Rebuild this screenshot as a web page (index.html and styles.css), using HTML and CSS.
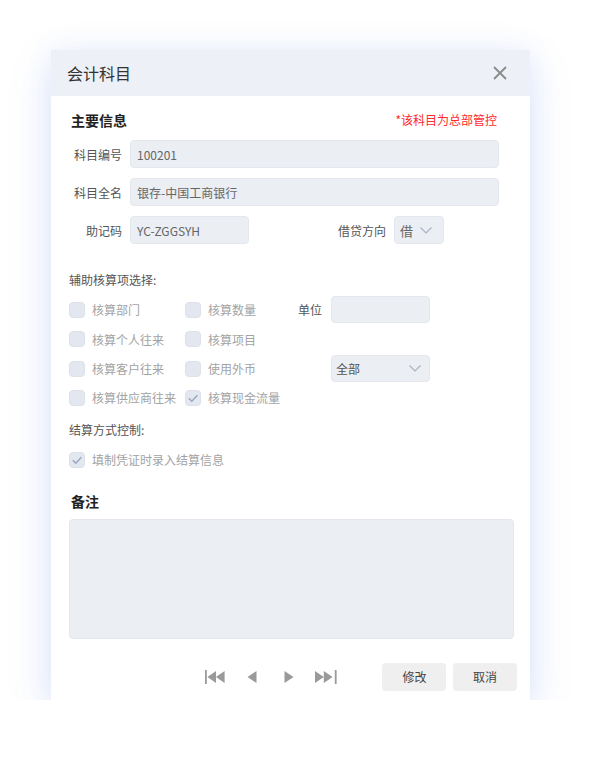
FILE: index.html
```html
<!DOCTYPE html>
<html lang="zh">
<head>
<meta charset="utf-8">
<title>会计科目</title>
<link rel="stylesheet" href="styles.css">
</head>
<body>
<div class="dialog">
  <div class="header">
    <span class="title">会计科目</span>
    <svg class="close" width="14" height="14" viewBox="0 0 14 14"><path d="M1 1L13 13M13 1L1 13" stroke="#8a8a8a" stroke-width="1.8" fill="none"/></svg>
  </div>
  <div class="body">
    <div class="section-head">
      <span class="section-title">主要信息</span>
      <span class="warn">*该科目为总部管控</span>
    </div>
    <div class="row">
      <span class="label">科目编号</span>
      <div class="input wide">100201</div>
    </div>
    <div class="row">
      <span class="label">科目全名</span>
      <div class="input wide">银存-中国工商银行</div>
    </div>
    <div class="row">
      <span class="label">助记码</span>
      <div class="input short">YC-ZGGSYH</div>
      <span class="label dir-label">借贷方向</span>
      <div class="input select dir">借<svg class="chev" width="12" height="7" viewBox="0 0 12 7"><path d="M0.5 0.5L6 6L11.5 0.5" stroke="#aab3c5" stroke-width="1.2" fill="none"/></svg></div>
    </div>

    <div class="sub-head aux-head">辅助核算项选择:</div>
    <div class="check-grid">
      <div class="check"><span class="box"></span><span>核算部门</span></div>
      <div class="check"><span class="box"></span><span>核算数量</span></div>
      <div class="unit"><span class="unit-label">单位</span><div class="input unit-input"></div></div>

      <div class="check"><span class="box"></span><span>核算个人往来</span></div>
      <div class="check"><span class="box"></span><span>核算项目</span></div>
      <div></div>

      <div class="check"><span class="box"></span><span>核算客户往来</span></div>
      <div class="check"><span class="box"></span><span>使用外币</span></div>
      <div class="unit"><div class="input select cur">全部<svg class="chev" width="12" height="7" viewBox="0 0 12 7"><path d="M0.5 0.5L6 6L11.5 0.5" stroke="#aab3c5" stroke-width="1.2" fill="none"/></svg></div></div>

      <div class="check"><span class="box"></span><span>核算供应商往来</span></div>
      <div class="check"><span class="box"><svg width="16" height="16" viewBox="0 0 16 16"><path d="M3.8 8.2L6.8 11.2L12.4 5.2" stroke="#9aa6bd" stroke-width="1.4" fill="none"/></svg></span><span>核算现金流量</span></div>
      <div></div>
    </div>

    <div class="sub-head settle-head">结算方式控制:</div>
    <div class="check settle"><span class="box"><svg width="16" height="16" viewBox="0 0 16 16"><path d="M3.8 8.2L6.8 11.2L12.4 5.2" stroke="#9aa6bd" stroke-width="1.4" fill="none"/></svg></span><span>填制凭证时录入结算信息</span></div>

    <div class="section-title remark-title">备注</div>
    <div class="textarea"></div>

    <div class="footer">
      <div class="nav">
        <span class="nav-btn"><svg width="20" height="14" viewBox="0 0 20 14"><rect x="0" y="0" width="1.8" height="14" fill="#9a9a9a"/><path d="M2.4 7L11 1V13Z M11 7L19.6 1V13Z" fill="#9a9a9a"/></svg></span>
        <span class="nav-btn"><svg width="10" height="14" viewBox="0 0 10 14"><path d="M0.5 7L9.5 1V13Z" fill="#9a9a9a"/></svg></span>
        <span class="nav-btn"><svg width="10" height="14" viewBox="0 0 10 14"><path d="M9.5 7L0.5 1V13Z" fill="#9a9a9a"/></svg></span>
        <span class="nav-btn"><svg width="22" height="14" viewBox="0 0 22 14"><path d="M0 1L8.8 7L0 13Z M8.8 1L17.6 7L8.8 13Z" fill="#9a9a9a"/><rect x="19.8" y="0" width="1.8" height="14" fill="#9a9a9a"/></svg></span>
      </div>
      <button class="btn">修改</button>
      <button class="btn">取消</button>
    </div>
  </div>
</div>
</body>
</html>
```
FILE: styles.css
```css
html, body {
  margin: 0;
  padding: 0;
  background: #ffffff;
}
body {
  font-family: "Noto Sans CJK SC", "Noto Sans", sans-serif;
  color: #333;
  padding: 50px 0 0 51px;
}
.dialog {
  width: 479px;
  height: 650px;
  background: #fff;
  box-shadow: 0 14px 40px rgba(80, 120, 230, 0.17), 0 0 26px rgba(80, 120, 230, 0.08);
  display: flex;
  flex-direction: column;
}
.header {
  height: 46px;
  background: #edf0f6;
  display: flex;
  align-items: center;
  justify-content: space-between;
  padding: 0 23px 0 16px;
}
.title {
  font-size: 16px;
  color: #333;
  line-height: 20px;
}
.body {
  padding: 14px 13px 0 18px;
  display: flex;
  flex-direction: column;
}
.section-head {
  display: flex;
  justify-content: space-between;
  align-items: center;
  height: 20px;
  width: 428px;
}
.section-title {
  font-size: 14px;
  font-weight: bold;
  color: #222;
  line-height: 20px;
  padding-left: 2px;
}
.warn {
  font-size: 12px;
  color: #ff2a2a;
  line-height: 20px;
}
.row {
  display: flex;
  align-items: center;
  height: 28px;
  margin-top: 10px;
}
.label {
  width: 53px;
  text-align: right;
  font-size: 12px;
  color: #555;
  margin-right: 8px;
  flex: none;
}
.input {
  box-sizing: border-box;
  height: 28px;
  background: #ebeef3;
  border: 1px solid #e4e7ed;
  border-radius: 4px;
  font-size: 12px;
  color: #666;
  display: flex;
  align-items: center;
  padding: 0 6px;
  flex: none;
}
.wide { width: 369px; }
.short { width: 119px; }
.dir-label {
  width: 48px;
  margin-left: 89px;
}
.select {
  justify-content: space-between;
  padding: 0 11px 0 5px;
}
.dir { width: 50px; font-size: 13px; }
.sub-head {
  font-size: 12px;
  color: #555;
  line-height: 18px;
  height: 18px;
}
.aux-head { margin-top: 27px; }
.check-grid {
  display: grid;
  grid-template-columns: 116px 113px 132px;
  grid-auto-rows: 29.33px;
  margin-top: 6.33px;
}
.check {
  display: flex;
  align-items: center;
  font-size: 12px;
  color: #a3a3a3;
}
.box {
  box-sizing: border-box;
  width: 16px;
  height: 16px;
  border-radius: 4px;
  background: #e3e7f0;
  border: 1px solid #dce1ea;
  margin-right: 7px;
  flex: none;
  display: flex;
  align-items: center;
  justify-content: center;
}
.box svg { display: block; margin: -1px; }
.unit {
  display: flex;
  align-items: center;
}
.unit-label {
  font-size: 12px;
  color: #555;
  width: 33px;
}
.unit-input { width: 99px; height: 27px; }
.cur {
  width: 99px;
  height: 27px;
  margin-left: 33px;
  font-size: 12px;
  color: #555;
  padding: 0 8px 0 4px;
}
.settle-head { margin-top: 8.33px; }
.settle {
  height: 29.33px;
  margin-top: 6.33px;
}
.remark-title { margin-top: 16.33px; }
.textarea {
  box-sizing: border-box;
  width: 445px;
  height: 120px;
  margin-top: 8px;
  background: #ebeef3;
  border: 1px solid #e4e7ed;
  border-radius: 4px;
}
.footer {
  display: flex;
  justify-content: flex-end;
  align-items: center;
  margin-top: 24px;
  height: 28px;
}
.nav {
  display: flex;
  margin-right: 31.4px;
}
.nav-btn {
  width: 37px;
  height: 14px;
  display: flex;
  justify-content: center;
  align-items: center;
}
.nav-btn svg { display: block; }
.btn {
  width: 64px;
  height: 28px;
  border: none;
  border-radius: 4px;
  background: #efeff0;
  color: #444;
  font-family: "Noto Sans CJK SC", "Noto Sans", sans-serif;
  font-size: 12px;
  margin-left: 6.6px;
  padding: 0;
}
```
